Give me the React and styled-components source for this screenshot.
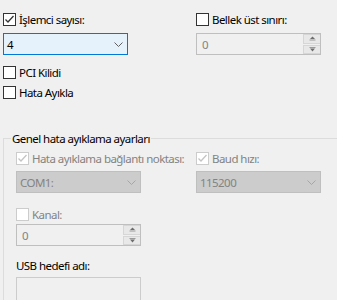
import React from "react";
import styled, { createGlobalStyle, css } from "styled-components";

const GlobalStyle = createGlobalStyle`
  html, body {
    margin: 0;
    background: #f0f0f0;
    overflow: hidden;
  }
  body {
    font-family: "Noto Sans", "DejaVu Sans", sans-serif;
    font-size: 11.5px;
    letter-spacing: -0.55px;
    color: #000;
  }
`;

const Page = styled.div`
  padding: 13px 0 0 3px;
`;

const TopGrid = styled.div`
  display: grid;
  grid-template-columns: 125px 125px;
  column-gap: 68px;
  align-items: start;
`;

const Column = styled.div`
  display: flex;
  flex-direction: column;
`;

const CheckRow = styled.label`
  display: flex;
  align-items: center;
  gap: 3px;
  height: 13px;
  line-height: 13px;
  white-space: nowrap;
  margin-top: ${(p) => p.$top || 0}px;
  color: ${(p) => (p.$disabled ? "#838383" : "#000")};
`;

const Box = styled.span`
  flex: none;
  width: 11px;
  height: 11px;
  border: 1px solid ${(p) => (p.$disabled ? "#cccccc" : "#333333")};
  background: #fff;
  display: flex;
  align-items: center;
  justify-content: center;
`;

const Combo = styled.div`
  box-sizing: border-box;
  width: 125px;
  height: 22px;
  margin-top: ${(p) => p.$top || 0}px;
  display: flex;
  align-items: center;
  justify-content: space-between;
  padding: 0 4px 0 3px;
  border: 1px solid #adadad;
  background: #e1e1e1;
  ${(p) =>
    p.$focused &&
    css`
      border-color: #0078d7;
      background: #e5f1fb;
    `}
  ${(p) =>
    p.$disabled &&
    css`
      border-color: #bfbfbf;
      background: #cccccc;
      color: #838383;
    `}
`;

const Spin = styled.div`
  box-sizing: border-box;
  width: 125px;
  height: 22px;
  margin-top: ${(p) => p.$top || 0}px;
  display: flex;
  border: 1px solid #bfbfbf;
  background: #f0f0f0;
  color: #838383;
`;

const SpinValue = styled.div`
  flex: 1;
  display: flex;
  align-items: center;
  padding-left: 5px;
`;

const SpinButtons = styled.div`
  width: 17px;
  display: flex;
  flex-direction: column;
  gap: 1px;
`;

const SpinButton = styled.div`
  flex: 1;
  display: flex;
  align-items: center;
  justify-content: center;
  background: #e8e8e8;
  border: 1px solid #d6d6d6;
  border-right: 0;
`;

const Group = styled.fieldset`
  box-sizing: border-box;
  margin: 32px 0 0 0;
  padding: 6px 0 0 12px;
  width: 334px;
  border: 1px solid #dcdcdc;
  border-right: 0;
  min-width: 0;
`;

const Legend = styled.legend`
  margin-left: -5px;
  padding: 0 1px;
  line-height: 15px;
`;

const InnerGrid = styled.div`
  display: grid;
  grid-template-columns: 125px 125px;
  column-gap: 55px;
  align-items: start;
`;

const Label = styled.div`
  margin-top: ${(p) => p.$top || 0}px;
  line-height: 15px;
`;

const TextBox = styled.div`
  box-sizing: border-box;
  width: 125px;
  height: 24px;
  margin-top: ${(p) => p.$top || 0}px;
  border: 1px solid #cccccc;
  background: #f0f0f0;
`;

const Check = ({ checked, disabled }) => (
  <Box $disabled={disabled}>
    {checked && (
      <svg width="11" height="11" viewBox="0 0 11 11">
        <path
          d="M1.5 5.5 L4 8 L9.5 2"
          fill="none"
          stroke={disabled ? "#c4c4c4" : "#333"}
          strokeWidth="1.3"
        />
      </svg>
    )}
  </Box>
);

const Chevron = ({ disabled }) => (
  <svg width="9" height="5" viewBox="0 0 9 5">
    <path
      d="M0.5 0.5 L4.5 4.5 L8.5 0.5"
      fill="none"
      stroke={disabled ? "#a6a6a6" : "#606060"}
      strokeWidth="1"
    />
  </svg>
);

const Arrow = ({ up }) => (
  <svg width="7" height="5" viewBox="0 0 7 5">
    {up ? (
      <>
        <path d="M3.5 0.5 L6 3 L1 3 Z" fill="#6d6d6d" />
        <rect x="0.5" y="3.5" width="6" height="1" fill="#9a9a9a" />
      </>
    ) : (
      <>
        <rect x="0.5" y="0" width="6" height="1" fill="#9a9a9a" />
        <path d="M1 1.5 L6 1.5 L3.5 4.5 Z" fill="#6d6d6d" />
      </>
    )}
  </svg>
);

const SpinBox = ({ value, top }) => (
  <Spin $top={top}>
    <SpinValue>{value}</SpinValue>
    <SpinButtons>
      <SpinButton>
        <Arrow up />
      </SpinButton>
      <SpinButton>
        <Arrow />
      </SpinButton>
    </SpinButtons>
  </Spin>
);

const App = () => (
  <>
    <GlobalStyle />
    <Page>
      <TopGrid>
        <Column>
          <CheckRow>
            <Check checked />
            İşlemci sayısı:
          </CheckRow>
          <Combo $focused $top={7}>
            <span>4</span>
            <Chevron />
          </Combo>
          <CheckRow $top={11}>
            <Check />
            PCI Kilidi
          </CheckRow>
          <CheckRow $top={7}>
            <Check />
            Hata Ayıkla
          </CheckRow>
        </Column>
        <Column>
          <CheckRow>
            <Check />
            Bellek üst sınırı:
          </CheckRow>
          <SpinBox value="0" top={7} />
        </Column>
      </TopGrid>

      <Group>
        <Legend>Genel hata ayıklama ayarları</Legend>
        <InnerGrid>
          <Column>
            <CheckRow $disabled>
              <Check checked disabled />
              Hata ayıklama bağlantı noktası:
            </CheckRow>
            <Combo $disabled $top={6}>
              <span>COM1:</span>
              <Chevron disabled />
            </Combo>
            <CheckRow $disabled $top={15}>
              <Check disabled />
              Kanal:
            </CheckRow>
            <SpinBox value="0" top={3} />
            <Label $top={12}>USB hedefi adı:</Label>
            <TextBox $top={4} />
          </Column>
          <Column>
            <CheckRow $disabled>
              <Check checked disabled />
              Baud hızı:
            </CheckRow>
            <Combo $disabled $top={6}>
              <span>115200</span>
              <Chevron disabled />
            </Combo>
          </Column>
        </InnerGrid>
      </Group>
    </Page>
  </>
);

export default App;
